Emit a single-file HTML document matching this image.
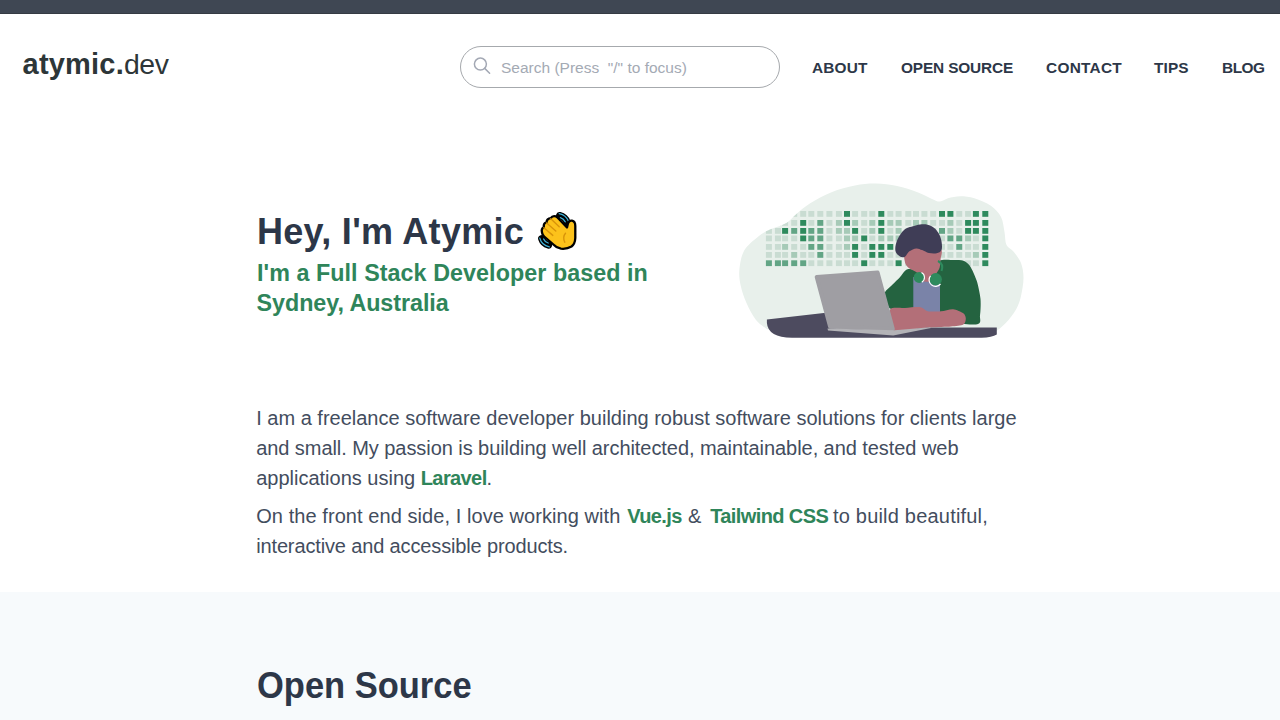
<!DOCTYPE html>
<html>
<head>
<meta charset="utf-8">
<style>
html,body{margin:0;padding:0;}
body{width:1280px;height:720px;overflow:hidden;position:relative;background:#fff;font-family:"Liberation Sans",sans-serif;}
.abs{position:absolute;white-space:nowrap;}
#topbar{position:absolute;left:0;top:0;width:1280px;height:13px;background:#3f4753;border-bottom:1px solid #353b43;}
#logo{left:22.6px;top:43.7px;font-size:29px;line-height:40px;color:#2d3638;}
#logo b{font-weight:bold;letter-spacing:0.2px;}
#search{position:absolute;left:460px;top:46px;width:318px;height:40px;border:1px solid #a6a9ad;border-radius:21px;}
#ph{left:501px;top:58.3px;font-size:15.5px;line-height:20px;color:#a4aab4;}
.nav{top:58.2px;font-size:15.4px;line-height:20px;font-weight:bold;color:#2d3748;letter-spacing:0;}
#h1{left:257px;top:210.4px;letter-spacing:0.3px;font-size:36px;line-height:44px;font-weight:bold;color:#2d3748;}
.sub{left:257px;font-size:23.3px;line-height:29.3px;font-weight:bold;color:#2f855a;}
.p{left:256.2px;font-size:20px;line-height:30px;color:#434d5e;}
.w{position:absolute;top:0;}
.p b{color:#2f855a;letter-spacing:-0.6px;}
#gray{position:absolute;left:0;top:592px;width:1280px;height:128px;background:#f7fafc;}
#os{left:257px;top:663.7px;font-size:36px;line-height:44px;transform:scaleX(0.958);transform-origin:0 0;font-weight:bold;color:#2d3748;}
</style>
</head>
<body>
<div id="topbar"></div>
<div id="logo" class="abs"><b>atymic.</b><span style="font-size:28.4px;letter-spacing:-0.4px">dev</span></div>
<div id="search"></div>
<svg class="abs" style="left:472px;top:56px" width="20" height="20" viewBox="0 0 20 20">
  <circle cx="8.4" cy="8.1" r="6" fill="none" stroke="#a3a8b4" stroke-width="1.5"/>
  <line x1="12.7" y1="12.4" x2="17.6" y2="17.3" stroke="#a3a8b4" stroke-width="1.5" stroke-linecap="round"/>
</svg>
<div id="ph" class="abs">Search (Press &nbsp;"/" to focus)</div>
<div class="abs nav" style="left:812px;letter-spacing:0.15px">ABOUT</div>
<div class="abs nav" style="left:901px;letter-spacing:-0.15px">OPEN SOURCE</div>
<div class="abs nav" style="left:1046px;letter-spacing:0.28px">CONTACT</div>
<div class="abs nav" style="left:1154px;letter-spacing:0.13px">TIPS</div>
<div class="abs nav" style="left:1222px;letter-spacing:-0.47px">BLOG</div>

<!--wave--><svg class="abs" style="left:534px;top:206px" width="46" height="48" viewBox="0 0 46 48">
<g stroke-linecap="round" fill="none">
<path d="M25.6 9.6 Q31.2 11 33 16.2" stroke="#000" stroke-width="7.2"/>
<path d="M25.2 7.6 Q32.2 9 34.8 15.8" stroke="#3fb0d6" stroke-width="1.3"/>
<path d="M26.3 11.6 Q29.8 12.6 31.2 15.8" stroke="#3fb0d6" stroke-width="1.3"/>
<path d="M7.7 32.6 Q9.2 37.5 14.6 39" stroke="#000" stroke-width="7.2"/>
<path d="M5.8 32.2 Q7.6 39.2 15.3 40.9" stroke="#3fb0d6" stroke-width="1.3"/>
<path d="M9.6 33 Q10.8 36 14.2 37" stroke="#3fb0d6" stroke-width="1.3"/>
</g>
<path d="M8 26.5 Q7 22.5 9.8 21.2 Q9.3 17 12.5 16.4 Q12.8 12.3 16.8 12.1 Q18.5 9.3 22 10.4 Q23.5 11 24.5 12.5 L33 21.5 L34 17.3 Q35.3 14.3 38 14.7 Q41.3 15.5 41.3 20 L41.3 32 Q41 38 37.5 40.5 Q33 43.3 27 42.7 Q22.5 42 20 39 L10.2 30.5 Q8.3 28.8 8 26.5 Z" fill="#fcc21b" stroke="#000" stroke-width="2.3" stroke-linejoin="round"/>
<g stroke="#d8940a" stroke-width="1.4" fill="none" stroke-linecap="round">
<path d="M16.8 12.8 L25.2 20.8"/>
<path d="M12.6 17 L21.8 25"/>
<path d="M9.9 21.8 L18.8 29.4"/>
<path d="M31.5 27.3 Q28.3 31 30.8 36.2"/>
</g>
</svg>
<!--/wave-->
<div id="h1" class="abs">Hey, I'm Atymic</div>
<div class="abs sub" style="top:259px;letter-spacing:0.06px">I'm a Full Stack Developer based in</div>
<div class="abs sub" style="top:289.3px;left:256.6px;letter-spacing:-0.05px">Sydney, Australia</div>

<!-- illustration placeholder -->
<svg id="illu" class="abs" style="left:730px;top:175px" width="305" height="170" viewBox="730 175 305 170">
<defs><clipPath id="cc"><path d="M767.0 329.2 C765.2 327.7 759.4 324.4 756.0 320.0 C752.6 315.6 749.0 308.7 746.5 303.0 C744.0 297.3 742.0 291.6 740.8 286.0 C739.6 280.4 738.8 275.3 739.4 269.4 C740.0 263.5 741.1 256.0 744.2 250.5 C747.4 245.0 754.0 239.9 758.3 236.4 C762.6 232.9 766.4 231.2 770.0 229.5 C773.6 227.8 776.9 227.3 780.0 226.0 C783.1 224.7 785.7 223.6 788.5 221.5 C791.3 219.4 793.4 216.5 797.0 213.5 C800.6 210.5 804.5 206.9 810.2 203.3 C816.0 199.8 824.0 195.2 831.5 192.2 C839.0 189.2 847.6 186.9 855.0 185.5 C862.4 184.1 869.0 183.5 876.0 183.6 C883.0 183.7 890.1 184.6 897.0 186.0 C903.9 187.4 911.7 190.0 917.5 192.2 C923.3 194.4 928.2 197.4 932.0 199.0 C935.8 200.6 937.3 201.7 940.0 201.6 C942.7 201.5 944.6 199.2 948.0 198.3 C951.4 197.4 956.0 196.3 960.4 196.3 C964.8 196.3 969.3 196.7 974.4 198.3 C979.5 199.9 986.5 202.6 990.9 205.7 C995.3 208.8 998.7 212.6 1001.0 217.0 C1003.3 221.4 1003.6 227.3 1004.5 232.0 C1005.4 236.7 1004.9 241.7 1006.5 245.0 C1008.1 248.3 1011.5 249.0 1013.9 252.0 C1016.3 255.0 1019.4 258.7 1021.0 263.0 C1022.6 267.3 1023.5 272.5 1023.5 278.0 C1023.5 283.5 1022.2 290.8 1021.0 296.0 C1019.8 301.2 1018.5 304.9 1016.0 309.4 C1013.5 313.9 1009.2 319.2 1006.0 322.8 C1002.8 326.4 998.3 329.6 996.8 331.0 L990 330 L775 329 Z"/></clipPath></defs><path d="M767.0 329.2 C765.2 327.7 759.4 324.4 756.0 320.0 C752.6 315.6 749.0 308.7 746.5 303.0 C744.0 297.3 742.0 291.6 740.8 286.0 C739.6 280.4 738.8 275.3 739.4 269.4 C740.0 263.5 741.1 256.0 744.2 250.5 C747.4 245.0 754.0 239.9 758.3 236.4 C762.6 232.9 766.4 231.2 770.0 229.5 C773.6 227.8 776.9 227.3 780.0 226.0 C783.1 224.7 785.7 223.6 788.5 221.5 C791.3 219.4 793.4 216.5 797.0 213.5 C800.6 210.5 804.5 206.9 810.2 203.3 C816.0 199.8 824.0 195.2 831.5 192.2 C839.0 189.2 847.6 186.9 855.0 185.5 C862.4 184.1 869.0 183.5 876.0 183.6 C883.0 183.7 890.1 184.6 897.0 186.0 C903.9 187.4 911.7 190.0 917.5 192.2 C923.3 194.4 928.2 197.4 932.0 199.0 C935.8 200.6 937.3 201.7 940.0 201.6 C942.7 201.5 944.6 199.2 948.0 198.3 C951.4 197.4 956.0 196.3 960.4 196.3 C964.8 196.3 969.3 196.7 974.4 198.3 C979.5 199.9 986.5 202.6 990.9 205.7 C995.3 208.8 998.7 212.6 1001.0 217.0 C1003.3 221.4 1003.6 227.3 1004.5 232.0 C1005.4 236.7 1004.9 241.7 1006.5 245.0 C1008.1 248.3 1011.5 249.0 1013.9 252.0 C1016.3 255.0 1019.4 258.7 1021.0 263.0 C1022.6 267.3 1023.5 272.5 1023.5 278.0 C1023.5 283.5 1022.2 290.8 1021.0 296.0 C1019.8 301.2 1018.5 304.9 1016.0 309.4 C1013.5 313.9 1009.2 319.2 1006.0 322.8 C1002.8 326.4 998.3 329.6 996.8 331.0 L990 330 L775 329 Z" fill="#e8f0eb"/><g clip-path="url(#cc)"><rect x="765.90" y="211" width="6" height="5.8" fill="#c9dcd2"/><rect x="774.90" y="211" width="6" height="5.8" fill="#c9dcd2"/><rect x="782.10" y="211" width="6" height="5.8" fill="#c9dcd2"/><rect x="791.20" y="211" width="6" height="5.8" fill="#c9dcd2"/><rect x="800.20" y="211" width="6" height="5.8" fill="#c9dcd2"/><rect x="808.30" y="211" width="6" height="5.8" fill="#c9dcd2"/><rect x="817.30" y="211" width="6" height="5.8" fill="#c9dcd2"/><rect x="826.40" y="211" width="6" height="5.8" fill="#c9dcd2"/><rect x="835.90" y="211" width="6" height="5.8" fill="#c9dcd2"/><rect x="844.00" y="211" width="6" height="5.8" fill="#2e8a5d"/><rect x="852.10" y="211" width="6" height="5.8" fill="#c9dcd2"/><rect x="861.20" y="211" width="6" height="5.8" fill="#c9dcd2"/><rect x="869.30" y="211" width="6" height="5.8" fill="#c9dcd2"/><rect x="878.30" y="211" width="6" height="5.8" fill="#2e8a5d"/><rect x="887.30" y="211" width="6" height="5.8" fill="#c9dcd2"/><rect x="895.60" y="211" width="6" height="5.8" fill="#c9dcd2"/><rect x="905.30" y="211" width="6" height="5.8" fill="#c9dcd2"/><rect x="913.00" y="211" width="6" height="5.8" fill="#c9dcd2"/><rect x="921.40" y="211" width="6" height="5.8" fill="#c9dcd2"/><rect x="930.20" y="211" width="6" height="5.8" fill="#c9dcd2"/><rect x="939.00" y="211" width="6" height="5.8" fill="#2e8a5d"/><rect x="947.40" y="211" width="6" height="5.8" fill="#2e8a5d"/><rect x="956.25" y="211" width="6" height="5.8" fill="#c9dcd2"/><rect x="965.10" y="211" width="6" height="5.8" fill="#c9dcd2"/><rect x="972.90" y="211" width="6" height="5.8" fill="#2e8a5d"/><rect x="982.30" y="211" width="6" height="5.8" fill="#2e8a5d"/><rect x="765.90" y="220" width="6" height="5.8" fill="#c9dcd2"/><rect x="774.90" y="220" width="6" height="5.8" fill="#c9dcd2"/><rect x="782.10" y="220" width="6" height="5.8" fill="#c9dcd2"/><rect x="791.20" y="220" width="6" height="5.8" fill="#c9dcd2"/><rect x="800.20" y="220" width="6" height="5.8" fill="#2e8a5d"/><rect x="808.30" y="220" width="6" height="5.8" fill="#c9dcd2"/><rect x="817.30" y="220" width="6" height="5.8" fill="#62a585"/><rect x="826.40" y="220" width="6" height="5.8" fill="#c9dcd2"/><rect x="835.90" y="220" width="6" height="5.8" fill="#a6cab7"/><rect x="844.00" y="220" width="6" height="5.8" fill="#2e8a5d"/><rect x="852.10" y="220" width="6" height="5.8" fill="#a6cab7"/><rect x="861.20" y="220" width="6" height="5.8" fill="#c9dcd2"/><rect x="869.30" y="220" width="6" height="5.8" fill="#a6cab7"/><rect x="878.30" y="220" width="6" height="5.8" fill="#2e8a5d"/><rect x="887.30" y="220" width="6" height="5.8" fill="#a6cab7"/><rect x="895.60" y="220" width="6" height="5.8" fill="#a6cab7"/><rect x="905.30" y="220" width="6" height="5.8" fill="#c9dcd2"/><rect x="913.00" y="220" width="6" height="5.8" fill="#a6cab7"/><rect x="921.40" y="220" width="6" height="5.8" fill="#a6cab7"/><rect x="930.20" y="220" width="6" height="5.8" fill="#c9dcd2"/><rect x="939.00" y="220" width="6" height="5.8" fill="#c9dcd2"/><rect x="947.40" y="220" width="6" height="5.8" fill="#a6cab7"/><rect x="956.25" y="220" width="6" height="5.8" fill="#c9dcd2"/><rect x="965.10" y="220" width="6" height="5.8" fill="#2e8a5d"/><rect x="972.90" y="220" width="6" height="5.8" fill="#2e8a5d"/><rect x="982.30" y="220" width="6" height="5.8" fill="#2e8a5d"/><rect x="765.90" y="228" width="6" height="5.8" fill="#c9dcd2"/><rect x="774.90" y="228" width="6" height="5.8" fill="#c9dcd2"/><rect x="782.10" y="228" width="6" height="5.8" fill="#2e8a5d"/><rect x="791.20" y="228" width="6" height="5.8" fill="#62a585"/><rect x="800.20" y="228" width="6" height="5.8" fill="#2e8a5d"/><rect x="808.30" y="228" width="6" height="5.8" fill="#62a585"/><rect x="817.30" y="228" width="6" height="5.8" fill="#62a585"/><rect x="826.40" y="228" width="6" height="5.8" fill="#c9dcd2"/><rect x="835.90" y="228" width="6" height="5.8" fill="#a6cab7"/><rect x="844.00" y="228" width="6" height="5.8" fill="#a6cab7"/><rect x="852.10" y="228" width="6" height="5.8" fill="#2e8a5d"/><rect x="861.20" y="228" width="6" height="5.8" fill="#c9dcd2"/><rect x="869.30" y="228" width="6" height="5.8" fill="#a6cab7"/><rect x="878.30" y="228" width="6" height="5.8" fill="#2e8a5d"/><rect x="887.30" y="228" width="6" height="5.8" fill="#c9dcd2"/><rect x="895.60" y="228" width="6" height="5.8" fill="#a6cab7"/><rect x="905.30" y="228" width="6" height="5.8" fill="#c9dcd2"/><rect x="913.00" y="228" width="6" height="5.8" fill="#c9dcd2"/><rect x="921.40" y="228" width="6" height="5.8" fill="#c9dcd2"/><rect x="930.20" y="228" width="6" height="5.8" fill="#c9dcd2"/><rect x="939.00" y="228" width="6" height="5.8" fill="#62a585"/><rect x="947.40" y="228" width="6" height="5.8" fill="#a6cab7"/><rect x="956.25" y="228" width="6" height="5.8" fill="#c9dcd2"/><rect x="965.10" y="228" width="6" height="5.8" fill="#2e8a5d"/><rect x="972.90" y="228" width="6" height="5.8" fill="#2e8a5d"/><rect x="982.30" y="228" width="6" height="5.8" fill="#2e8a5d"/><rect x="765.90" y="235.5" width="6" height="5.8" fill="#c9dcd2"/><rect x="774.90" y="235.5" width="6" height="5.8" fill="#c9dcd2"/><rect x="782.10" y="235.5" width="6" height="5.8" fill="#c9dcd2"/><rect x="791.20" y="235.5" width="6" height="5.8" fill="#c9dcd2"/><rect x="800.20" y="235.5" width="6" height="5.8" fill="#2e8a5d"/><rect x="808.30" y="235.5" width="6" height="5.8" fill="#62a585"/><rect x="817.30" y="235.5" width="6" height="5.8" fill="#62a585"/><rect x="826.40" y="235.5" width="6" height="5.8" fill="#c9dcd2"/><rect x="835.90" y="235.5" width="6" height="5.8" fill="#c9dcd2"/><rect x="844.00" y="235.5" width="6" height="5.8" fill="#a6cab7"/><rect x="852.10" y="235.5" width="6" height="5.8" fill="#a6cab7"/><rect x="861.20" y="235.5" width="6" height="5.8" fill="#2e8a5d"/><rect x="869.30" y="235.5" width="6" height="5.8" fill="#c9dcd2"/><rect x="878.30" y="235.5" width="6" height="5.8" fill="#a6cab7"/><rect x="887.30" y="235.5" width="6" height="5.8" fill="#a6cab7"/><rect x="895.60" y="235.5" width="6" height="5.8" fill="#a6cab7"/><rect x="905.30" y="235.5" width="6" height="5.8" fill="#c9dcd2"/><rect x="913.00" y="235.5" width="6" height="5.8" fill="#c9dcd2"/><rect x="921.40" y="235.5" width="6" height="5.8" fill="#c9dcd2"/><rect x="930.20" y="235.5" width="6" height="5.8" fill="#c9dcd2"/><rect x="939.00" y="235.5" width="6" height="5.8" fill="#c9dcd2"/><rect x="947.40" y="235.5" width="6" height="5.8" fill="#62a585"/><rect x="956.25" y="235.5" width="6" height="5.8" fill="#62a585"/><rect x="965.10" y="235.5" width="6" height="5.8" fill="#a6cab7"/><rect x="972.90" y="235.5" width="6" height="5.8" fill="#c9dcd2"/><rect x="982.30" y="235.5" width="6" height="5.8" fill="#2e8a5d"/><rect x="765.90" y="244" width="6" height="5.8" fill="#c9dcd2"/><rect x="774.90" y="244" width="6" height="5.8" fill="#c9dcd2"/><rect x="782.10" y="244" width="6" height="5.8" fill="#a6cab7"/><rect x="791.20" y="244" width="6" height="5.8" fill="#c9dcd2"/><rect x="800.20" y="244" width="6" height="5.8" fill="#c9dcd2"/><rect x="808.30" y="244" width="6" height="5.8" fill="#62a585"/><rect x="817.30" y="244" width="6" height="5.8" fill="#62a585"/><rect x="826.40" y="244" width="6" height="5.8" fill="#c9dcd2"/><rect x="835.90" y="244" width="6" height="5.8" fill="#c9dcd2"/><rect x="844.00" y="244" width="6" height="5.8" fill="#a6cab7"/><rect x="852.10" y="244" width="6" height="5.8" fill="#2e8a5d"/><rect x="861.20" y="244" width="6" height="5.8" fill="#c9dcd2"/><rect x="869.30" y="244" width="6" height="5.8" fill="#2e8a5d"/><rect x="878.30" y="244" width="6" height="5.8" fill="#2e8a5d"/><rect x="887.30" y="244" width="6" height="5.8" fill="#2e8a5d"/><rect x="895.60" y="244" width="6" height="5.8" fill="#c9dcd2"/><rect x="905.30" y="244" width="6" height="5.8" fill="#c9dcd2"/><rect x="913.00" y="244" width="6" height="5.8" fill="#c9dcd2"/><rect x="921.40" y="244" width="6" height="5.8" fill="#c9dcd2"/><rect x="930.20" y="244" width="6" height="5.8" fill="#c9dcd2"/><rect x="939.00" y="244" width="6" height="5.8" fill="#c9dcd2"/><rect x="947.40" y="244" width="6" height="5.8" fill="#c9dcd2"/><rect x="956.25" y="244" width="6" height="5.8" fill="#62a585"/><rect x="965.10" y="244" width="6" height="5.8" fill="#c9dcd2"/><rect x="972.90" y="244" width="6" height="5.8" fill="#c9dcd2"/><rect x="982.30" y="244" width="6" height="5.8" fill="#2e8a5d"/><rect x="765.90" y="252" width="6" height="5.8" fill="#c9dcd2"/><rect x="774.90" y="252" width="6" height="5.8" fill="#c9dcd2"/><rect x="782.10" y="252" width="6" height="5.8" fill="#c9dcd2"/><rect x="791.20" y="252" width="6" height="5.8" fill="#a6cab7"/><rect x="800.20" y="252" width="6" height="5.8" fill="#c9dcd2"/><rect x="808.30" y="252" width="6" height="5.8" fill="#c9dcd2"/><rect x="817.30" y="252" width="6" height="5.8" fill="#62a585"/><rect x="826.40" y="252" width="6" height="5.8" fill="#c9dcd2"/><rect x="835.90" y="252" width="6" height="5.8" fill="#c9dcd2"/><rect x="844.00" y="252" width="6" height="5.8" fill="#c9dcd2"/><rect x="852.10" y="252" width="6" height="5.8" fill="#2e8a5d"/><rect x="861.20" y="252" width="6" height="5.8" fill="#c9dcd2"/><rect x="869.30" y="252" width="6" height="5.8" fill="#2e8a5d"/><rect x="878.30" y="252" width="6" height="5.8" fill="#2e8a5d"/><rect x="887.30" y="252" width="6" height="5.8" fill="#c9dcd2"/><rect x="895.60" y="252" width="6" height="5.8" fill="#c9dcd2"/><rect x="905.30" y="252" width="6" height="5.8" fill="#c9dcd2"/><rect x="913.00" y="252" width="6" height="5.8" fill="#c9dcd2"/><rect x="921.40" y="252" width="6" height="5.8" fill="#c9dcd2"/><rect x="930.20" y="252" width="6" height="5.8" fill="#c9dcd2"/><rect x="939.00" y="252" width="6" height="5.8" fill="#c9dcd2"/><rect x="947.40" y="252" width="6" height="5.8" fill="#c9dcd2"/><rect x="956.25" y="252" width="6" height="5.8" fill="#c9dcd2"/><rect x="965.10" y="252" width="6" height="5.8" fill="#c9dcd2"/><rect x="972.90" y="252" width="6" height="5.8" fill="#a6cab7"/><rect x="982.30" y="252" width="6" height="5.8" fill="#2e8a5d"/><rect x="765.90" y="260.3" width="6" height="5.8" fill="#62a585"/><rect x="774.90" y="260.3" width="6" height="5.8" fill="#62a585"/><rect x="782.10" y="260.3" width="6" height="5.8" fill="#62a585"/><rect x="791.20" y="260.3" width="6" height="5.8" fill="#62a585"/><rect x="800.20" y="260.3" width="6" height="5.8" fill="#62a585"/><rect x="808.30" y="260.3" width="6" height="5.8" fill="#c9dcd2"/><rect x="817.30" y="260.3" width="6" height="5.8" fill="#c9dcd2"/><rect x="826.40" y="260.3" width="6" height="5.8" fill="#c9dcd2"/><rect x="835.90" y="260.3" width="6" height="5.8" fill="#c9dcd2"/><rect x="844.00" y="260.3" width="6" height="5.8" fill="#c9dcd2"/><rect x="852.10" y="260.3" width="6" height="5.8" fill="#c9dcd2"/><rect x="861.20" y="260.3" width="6" height="5.8" fill="#2e8a5d"/><rect x="869.30" y="260.3" width="6" height="5.8" fill="#c9dcd2"/><rect x="878.30" y="260.3" width="6" height="5.8" fill="#c9dcd2"/><rect x="887.30" y="260.3" width="6" height="5.8" fill="#c9dcd2"/><rect x="895.60" y="260.3" width="6" height="5.8" fill="#2e8a5d"/><rect x="905.30" y="260.3" width="6" height="5.8" fill="#c9dcd2"/><rect x="913.00" y="260.3" width="6" height="5.8" fill="#c9dcd2"/><rect x="921.40" y="260.3" width="6" height="5.8" fill="#c9dcd2"/><rect x="930.20" y="260.3" width="6" height="5.8" fill="#c9dcd2"/><rect x="939.00" y="260.3" width="6" height="5.8" fill="#c9dcd2"/><rect x="947.40" y="260.3" width="6" height="5.8" fill="#c9dcd2"/><rect x="956.25" y="260.3" width="6" height="5.8" fill="#c9dcd2"/><rect x="965.10" y="260.3" width="6" height="5.8" fill="#c9dcd2"/><rect x="972.90" y="260.3" width="6" height="5.8" fill="#c9dcd2"/><rect x="982.30" y="260.3" width="6" height="5.8" fill="#2e8a5d"/></g><path d="M766.9 319.4 L823.75 313.1 L900 318 L929.8 327.5 L996.8 327.5 L996.8 334.6 Q992 337.7 981.6 337.7 L792 337.7 Q768 337.5 766.9 323 Z" fill="#4d4b5f"/><path d="M907.5 269.2 C904.1 270.2 901.9 275.3 899.7 277.5 C897.5 279.7 893.2 283.9 891.3 285.8 C889.4 287.7 885.8 290.3 885.1 292.1 C884.4 293.9 885.5 297.3 886.1 299.4 C886.7 301.5 888.1 306.3 889.2 307.7 C890.4 309.1 889.6 308.4 895.0 310.0 C900.4 311.6 919.2 318.1 930.0 320.0 C940.8 321.9 969.3 325.1 976.0 324.5 C982.7 323.9 979.4 318.7 980.0 315.3 C980.6 311.9 980.9 303.6 980.5 299.0 C980.1 294.4 978.2 285.5 976.8 281.1 C975.4 276.7 971.7 268.5 969.8 265.8 C967.9 263.1 965.3 261.3 962.7 260.5 C960.1 259.7 953.5 259.9 950.3 259.9 C947.1 259.9 942.0 259.5 938.6 260.8 C935.2 262.1 929.1 268.9 925.0 270.0 C920.9 271.1 910.9 268.2 907.5 269.2Z" fill="#246340"/><path d="M913.3 277.0 L940.0 277.0 L940.0 314.0 L913.3 314.0Z" fill="#7a83a8"/><path d="M915.0 242.0 C911.3 243.3 905.9 249.2 904.6 252.0 C903.3 254.8 904.6 260.7 905.1 262.8 C905.6 264.9 907.1 266.5 908.5 267.7 C909.9 268.9 913.9 270.6 915.3 271.5 C916.7 272.4 918.3 273.2 919.2 274.5 C920.1 275.8 920.4 280.1 922.1 281.0 C923.8 281.9 930.0 281.9 931.8 281.0 C933.6 280.1 934.7 276.3 935.7 274.5 C936.7 272.7 938.9 269.8 939.6 267.7 C940.3 265.6 940.3 261.2 940.6 258.9 C940.9 256.6 942.6 252.4 941.5 250.1 C940.4 247.8 935.5 243.1 932.0 242.0 C928.5 240.9 918.7 240.7 915.0 242.0Z" fill="#b36f78"/><path d="M895.3 248.2 C895.4 246.5 895.9 243.9 896.5 242.0 C897.1 240.1 898.0 238.2 899.0 236.5 C900.0 234.8 901.2 232.9 902.5 231.5 C903.8 230.1 905.2 228.9 907.0 228.0 C908.8 227.1 910.8 226.9 913.0 226.3 C915.2 225.7 917.6 224.8 920.0 224.6 C922.4 224.3 925.1 224.2 927.5 224.8 C929.9 225.4 932.5 226.6 934.5 228.2 C936.5 229.8 938.1 232.2 939.3 234.5 C940.5 236.8 941.2 239.4 941.6 242.0 C942.0 244.6 942.3 248.2 941.5 250.1 C940.7 252.0 938.8 252.8 936.7 253.3 C934.6 253.8 931.3 253.6 928.9 253.1 C926.5 252.6 924.2 250.9 922.1 250.1 C920.0 249.3 918.4 248.2 916.3 248.4 C914.2 248.6 911.3 249.9 909.4 251.3 C907.5 252.7 906.2 256.2 904.6 257.0 C903.0 257.8 901.1 257.0 899.7 256.2 C898.3 255.4 896.7 253.7 896.0 252.4 C895.3 251.1 895.2 249.9 895.3 248.2Z" fill="#3f3d56"/><path d="M938 261 Q944 264 941.5 271" fill="none" stroke="#2e8a5d" stroke-width="2"/><circle cx="919.2" cy="277.4" r="5.5" fill="#2e8a5d"/><path d="M921.5 272.6 A5.5 5.5 0 0 1 921.8 282.2" fill="none" stroke="#fff" stroke-width="1.1"/><circle cx="935.7" cy="279.3" r="6.2" fill="#2e8a5d"/><path d="M930.5 275.8 A6.3 6.3 0 0 0 940.5 284" fill="none" stroke="#fff" stroke-width="1.2"/><path d="M890.2 309.2 C891.8 306.9 900.9 308.3 905.0 308.0 C909.1 307.7 917.6 306.8 920.6 307.2 C923.6 307.6 925.0 310.7 927.7 311.2 C930.4 311.8 937.6 311.5 941.0 311.2 C944.4 311.0 950.1 308.9 953.1 309.2 C956.1 309.5 961.6 312.1 963.3 313.3 C965.0 314.5 965.8 316.9 965.8 318.4 C965.8 319.9 965.3 323.4 963.3 324.5 C961.3 325.6 955.5 326.1 951.0 326.5 C946.5 326.9 937.2 326.9 929.8 327.5 C922.4 328.1 900.1 331.3 895.2 331.0 C890.3 330.7 893.9 328.4 893.2 325.5 C892.5 322.6 888.6 311.5 890.2 309.2Z" fill="#b36f78"/><path d="M816.7 276.9 L877.6 272.6 L892.8 328.9 L830.1 326.7Z" fill="#9f9ea3" stroke="#9f9ea3" stroke-width="4" stroke-linejoin="round"/><path d="M827.5 328.4 L894.8 330.3 L929.9 327.2 L931.0 328.0 L893.2 335.6 L828.0 330.5Z" fill="#b3b3b7"/>
</svg>

<div id="p1" class="abs p" style="top:402.7px">I am a freelance software developer building robust software solutions for clients large</div>
<div id="p2" class="abs p" style="top:432.7px;letter-spacing:-0.06px">and small. My passion is building well architected, maintainable, and tested web</div>
<div id="p3" class="abs p" style="top:462.7px">applications using <b>Laravel</b>.</div>
<div id="p4" class="abs p" style="top:500.7px;width:760px;height:30px"><span class="w" style="left:0;letter-spacing:0.07px">On the front end side, I love working with</span><b class="w" style="left:371px">Vue.js</b><span class="w" style="left:431.8px">&amp;</span><b class="w" style="left:454px">Tailwind CSS</b><span class="w" style="left:576.8px;letter-spacing:0.2px">to build beautiful,</span></div>
<div id="p5" class="abs p" style="top:530.7px;letter-spacing:-0.14px">interactive and accessible products.</div>

<div id="gray"></div>
<div id="os" class="abs">Open Source</div>
</body>
</html>
